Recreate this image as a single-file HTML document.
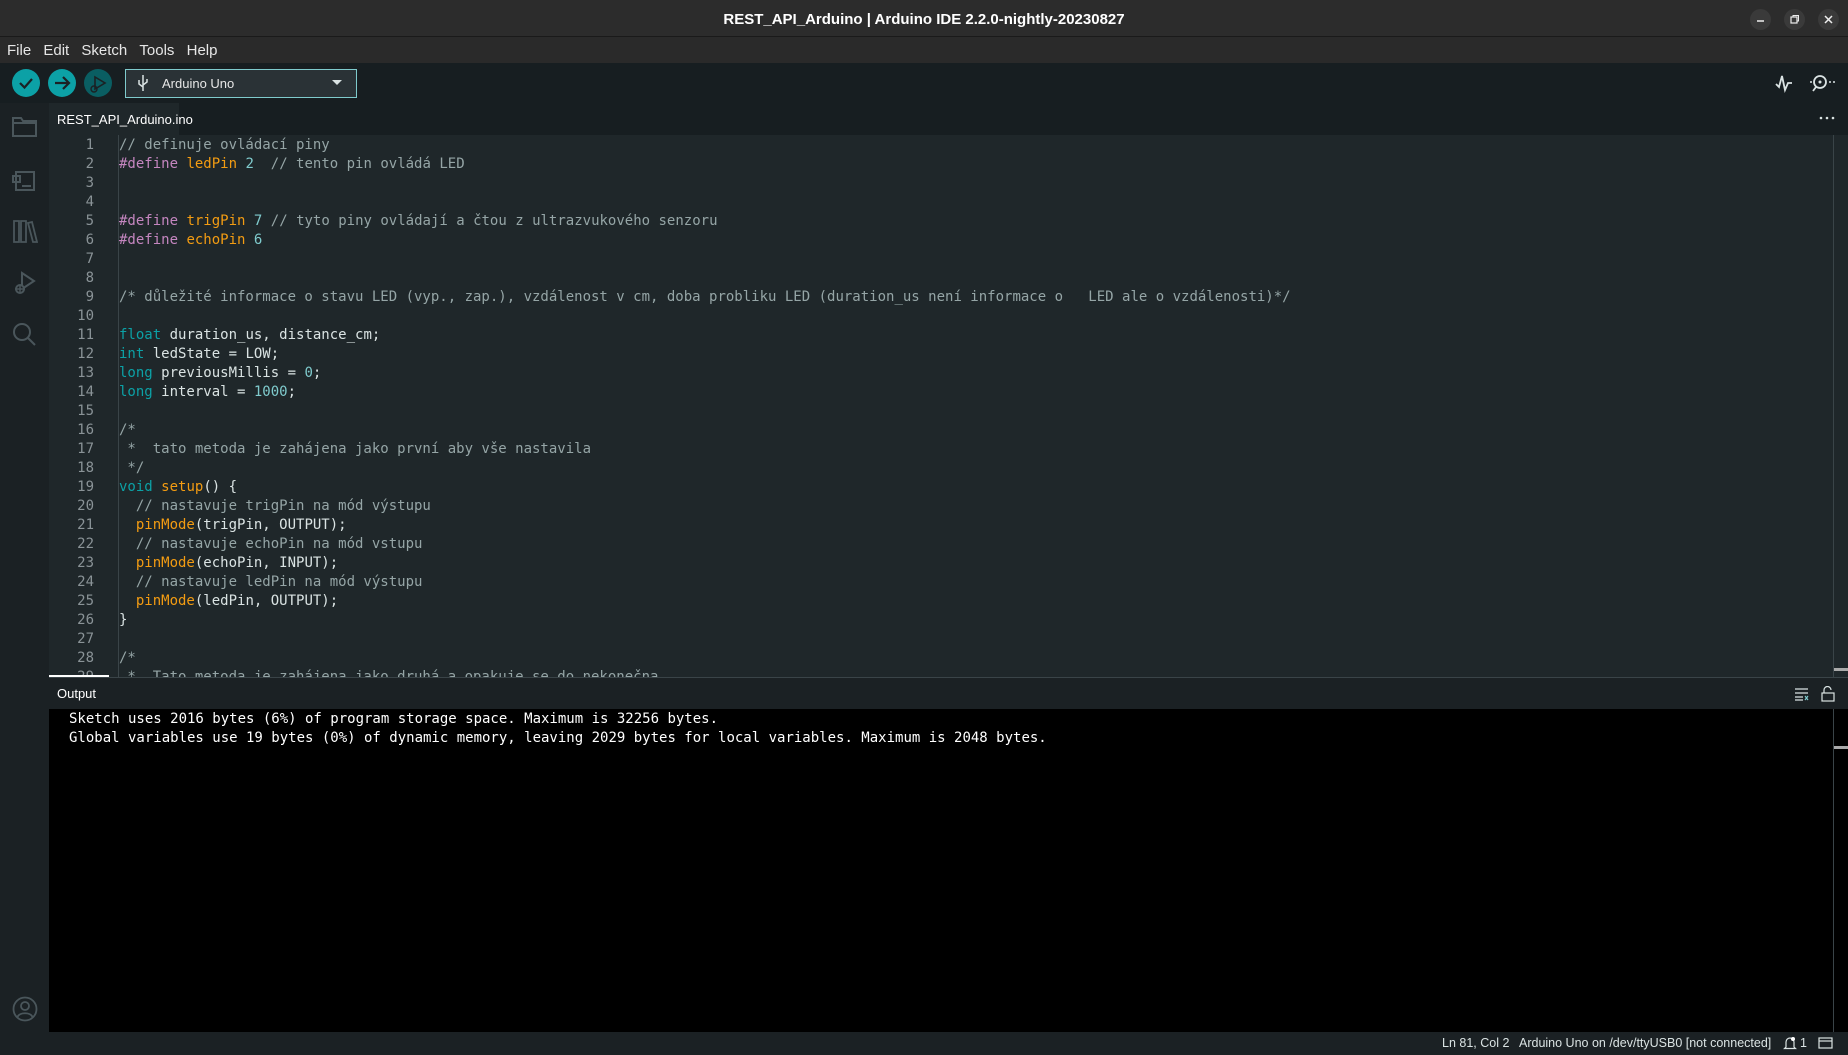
<!DOCTYPE html>
<html><head><meta charset="utf-8"><style>
*{margin:0;padding:0;box-sizing:border-box}
body{width:1848px;height:1055px;overflow:hidden;background:#171e21;font-family:"Liberation Sans","DejaVu Sans",sans-serif;position:relative}
.abs{position:absolute}
#title{left:0;top:0;width:1848px;height:37px;background:#2c2c2c;border-bottom:1px solid #1a1a1a;color:#fff;font-weight:bold;font-size:15px;text-align:center;line-height:39px}
.wb{top:9px;width:21px;height:21px;border-radius:50%;background:#3a3a3a}
#menu{left:0;top:37px;width:1848px;height:26px;background:#2a2a2a;color:#e6e6e6;font-size:15px;line-height:27px}
#menu span{margin-left:7px;margin-right:1px}
#toolbar{left:0;top:63px;width:1848px;height:40px;background:#171e21}
.btn{top:69px;width:28px;height:28px;border-radius:50%;background:#0ca1a6}
#board{left:125px;top:69px;width:232px;height:29px;border:1px solid #7fcbcd;background:#2a3236;color:#e6e6e6;font-size:13px;line-height:27px;padding-left:36px}
#side{left:0;top:103px;width:49px;height:929px;background:#1b2124}
#tabbar{left:49px;top:103px;width:1799px;height:32px;background:#171e21}
#tab{left:49px;top:103px;width:130px;height:32px;background:#1f272a;color:#fff;font-size:13px;line-height:33px;padding-left:8px}
#editor{left:49px;top:135px;width:1799px;height:542px;background:#1f272a;overflow:hidden}
.code{font-family:"DejaVu Sans Mono","Liberation Mono",monospace;font-size:14px;line-height:19px;white-space:pre}
#nums{left:0;top:1px;width:45px;text-align:right;color:#8a9397}
#src{left:70px;top:1px;color:#dae3e3}
#guide{left:69px;top:0;width:1px;height:542px;background:#3a4448}
.c{color:#95a5a6}.d{color:#c586c0}.o{color:#f39c12}.n{color:#7fcbcd}.k{color:#0ca1a6}
#outhead{left:49px;top:677px;width:1799px;height:32px;background:#1b2124;border-top:1px solid #3a4448;color:#fff;font-size:13px;line-height:32px;padding-left:8px}
#outbody{left:49px;top:709px;width:1799px;height:323px;background:#000}
#out{left:20px;top:1px;color:#fff}
#status{left:0;top:1032px;width:1848px;height:23px;background:#1b2124;color:#dae3e3;font-size:12.5px;line-height:23px}
svg{position:absolute}
</style></head><body>
<div id="title" class="abs">REST_API_Arduino | Arduino IDE 2.2.0-nightly-20230827</div>
<div class="abs wb" style="left:1750px"></div><div class="abs wb" style="left:1784px"></div><div class="abs wb" style="left:1818px"></div>
<svg style="left:1750px;top:9px" width="21" height="21"><line x1="7" y1="12" x2="14" y2="12" stroke="#eee" stroke-width="1.5"/></svg>
<svg style="left:1784px;top:9px" width="21" height="21"><rect x="7" y="8" width="6" height="6" fill="none" stroke="#eee" stroke-width="1.2"/><path d="M9 8V6.5h5.5V12H13" fill="none" stroke="#eee" stroke-width="1"/></svg>
<svg style="left:1818px;top:9px" width="21" height="21"><path d="M7 7l7 7M14 7l-7 7" stroke="#eee" stroke-width="1.5"/></svg>
<div id="menu" class="abs"><span>File</span> <span>Edit</span> <span>Sketch</span> <span>Tools</span> <span>Help</span></div>
<div id="toolbar" class="abs"></div>
<div class="abs btn" style="left:12px"></div><div class="abs btn" style="left:48px"></div><div class="abs btn" style="left:84px;background:#0a5e62"></div>
<svg style="left:12px;top:69px" width="28" height="28"><path d="M8 14l4.5 4.5L20 10" fill="none" stroke="#1b2124" stroke-width="2.2"/></svg>
<svg style="left:48px;top:69px" width="28" height="28"><path d="M7 14h14M15 8l6 6-6 6" fill="none" stroke="#1b2124" stroke-width="2.2"/></svg>
<svg style="left:84px;top:69px" width="28" height="28"><path d="M11 8l10 6-10 6z" fill="none" stroke="#1b2124" stroke-width="1.6"/><circle cx="10" cy="20" r="3" fill="none" stroke="#1b2124" stroke-width="1.4"/></svg>
<div id="board" class="abs">Arduino Uno</div>
<svg style="left:136px;top:74px" width="14" height="18"><path d="M7 1v16M7 13l-4-3V6M7 11l4-3V5" fill="none" stroke="#dae3e3" stroke-width="1.5"/></svg>
<svg style="left:332px;top:80px" width="10" height="6"><path d="M0 0h10L5 5z" fill="#dae3e3"/></svg>
<svg style="left:1774px;top:72px" width="24" height="22"><path d="M2 12l3 3 3-11 3 14 3-7h4" fill="none" stroke="#dae3e3" stroke-width="1.8"/></svg>
<svg style="left:1808px;top:72px" width="32" height="22"><circle cx="12" cy="10" r="6" fill="none" stroke="#dae3e3" stroke-width="1.8"/><circle cx="12" cy="10" r="1.5" fill="#dae3e3"/><path d="M8 15l-3 4" stroke="#dae3e3" stroke-width="1.8"/><circle cx="3" cy="10" r="1" fill="#dae3e3"/><circle cx="22" cy="10" r="1" fill="#dae3e3"/><circle cx="26" cy="10" r="1" fill="#dae3e3"/></svg>
<div id="side" class="abs"></div>
<svg style="left:12px;top:115px" width="26" height="24"><path d="M1 3h8l2 3h13v15H1z" fill="none" stroke="#4a565b" stroke-width="2"/><path d="M1 8h23" stroke="#4a565b" stroke-width="2"/></svg>
<svg style="left:12px;top:168px" width="26" height="26"><path d="M4 4h18v18H4zM1 8h7v6H1z" fill="#1b2124" stroke="#4a565b" stroke-width="2"/><path d="M10 18h9" stroke="#4a565b" stroke-width="2"/></svg>
<svg style="left:12px;top:218px" width="26" height="26"><path d="M2 3h5v21H2zM9 3h5v21H9zM16 5l4-1 5 20h-4z" stroke="#4a565b" stroke-width="1.8" fill="none"/></svg>
<svg style="left:12px;top:270px" width="26" height="26"><path d="M10 3l12 8-12 8z" fill="none" stroke="#4a565b" stroke-width="2"/><circle cx="8" cy="19" r="4" fill="#1b2124" stroke="#4a565b" stroke-width="2"/><path d="M8 15v8M3 19h10" stroke="#4a565b" stroke-width="1.5"/></svg>
<svg style="left:12px;top:322px" width="26" height="26"><circle cx="10" cy="10" r="8" fill="none" stroke="#4a565b" stroke-width="2"/><path d="M16 16l7 7" stroke="#4a565b" stroke-width="2"/></svg>
<svg style="left:12px;top:996px" width="26" height="26"><circle cx="13" cy="13" r="11.5" fill="none" stroke="#4a565b" stroke-width="1.8"/><circle cx="13" cy="10" r="4" fill="none" stroke="#4a565b" stroke-width="1.8"/><path d="M5.5 21c2-5 13-5 15 0" fill="none" stroke="#4a565b" stroke-width="1.8"/></svg>
<div id="tabbar" class="abs"></div>
<div id="tab" class="abs">REST_API_Arduino.ino</div>
<svg style="left:1818px;top:115px" width="18" height="6"><circle cx="3" cy="3" r="1.3" fill="#dae3e3"/><circle cx="9" cy="3" r="1.3" fill="#dae3e3"/><circle cx="15" cy="3" r="1.3" fill="#dae3e3"/></svg>
<div id="editor" class="abs">
<div id="guide" class="abs"></div>
<div id="nums" class="abs code">1
2
3
4
5
6
7
8
9
10
11
12
13
14
15
16
17
18
19
20
21
22
23
24
25
26
27
28
29</div>
<div id="src" class="abs code"><span class="c">// definuje ovládací piny</span>
<span class="d">#define</span> <span class="o">ledPin</span> <span class="n">2</span>  <span class="c">// tento pin ovládá LED</span>


<span class="d">#define</span> <span class="o">trigPin</span> <span class="n">7</span> <span class="c">// tyto piny ovládají a čtou z ultrazvukového senzoru</span>
<span class="d">#define</span> <span class="o">echoPin</span> <span class="n">6</span>


<span class="c">/* důležité informace o stavu LED (vyp., zap.), vzdálenost v cm, doba probliku LED (duration_us není informace o   LED ale o vzdálenosti)*/</span>

<span class="k">float</span> duration_us, distance_cm;
<span class="k">int</span> ledState = LOW;
<span class="k">long</span> previousMillis = <span class="n">0</span>;
<span class="k">long</span> interval = <span class="n">1000</span>;

<span class="c">/*</span>
<span class="c"> *  tato metoda je zahájena jako první aby vše nastavila</span>
<span class="c"> */</span>
<span class="k">void</span> <span class="o">setup</span>() {
  <span class="c">// nastavuje trigPin na mód výstupu</span>
  <span class="o">pinMode</span>(trigPin, OUTPUT);
  <span class="c">// nastavuje echoPin na mód vstupu</span>
  <span class="o">pinMode</span>(echoPin, INPUT);
  <span class="c">// nastavuje ledPin na mód výstupu</span>
  <span class="o">pinMode</span>(ledPin, OUTPUT);
}

<span class="c">/*</span>
<span class="c"> *  Tato metoda je zahájena jako druhá a opakuje se do nekonečna</span></div>
<div class="abs" style="left:1784px;top:0;width:1px;height:542px;background:#3a4448"></div>
<div class="abs" style="left:1785px;top:533px;width:14px;height:3px;background:#aaa"></div>
<div class="abs" style="left:0;top:540px;width:60px;height:2px;background:#fff"></div>
</div>
<div id="outhead" class="abs">Output</div>
<svg style="left:1794px;top:687px" width="16" height="14"><path d="M1 2h13M1 6h13M1 10h8M1 13h8" stroke="#dae3e3" stroke-width="1.2"/><path d="M11 9l3 4M14 9l-3 4" stroke="#7fcbcd" stroke-width="1.2"/></svg>
<svg style="left:1820px;top:686px" width="16" height="16"><rect x="2" y="7" width="12" height="8" fill="none" stroke="#dae3e3" stroke-width="1.2"/><path d="M4 7V4a3.5 3.5 0 0 1 7 0" fill="none" stroke="#dae3e3" stroke-width="1.2"/></svg>
<div id="outbody" class="abs"><div id="out" class="abs code">Sketch uses 2016 bytes (6%) of program storage space. Maximum is 32256 bytes.
Global variables use 19 bytes (0%) of dynamic memory, leaving 2029 bytes for local variables. Maximum is 2048 bytes.</div>
<div class="abs" style="left:1784px;top:0;width:1px;height:323px;background:#3a4448"></div>
<div class="abs" style="left:1785px;top:37px;width:14px;height:3px;background:#aaa"></div>
</div>
<div id="status" class="abs"><span class="abs" style="left:1442px">Ln 81, Col 2</span><span class="abs" style="left:1519px">Arduino Uno on /dev/ttyUSB0 [not connected]</span><span class="abs" style="left:1800px">1</span></div>
<svg style="left:1783px;top:1036px" width="14" height="15"><path d="M3 11V6a4 4 0 0 1 8 0v5l1.5 1.5h-11z" fill="none" stroke="#dae3e3" stroke-width="1.2"/><circle cx="10" cy="3" r="2" fill="#fff"/></svg>
<svg style="left:1818px;top:1037px" width="15" height="12"><rect x="1" y="1" width="13" height="10" fill="none" stroke="#dae3e3" stroke-width="1.2"/><path d="M1 4h13" stroke="#dae3e3" stroke-width="1.2"/></svg>
</body></html>
